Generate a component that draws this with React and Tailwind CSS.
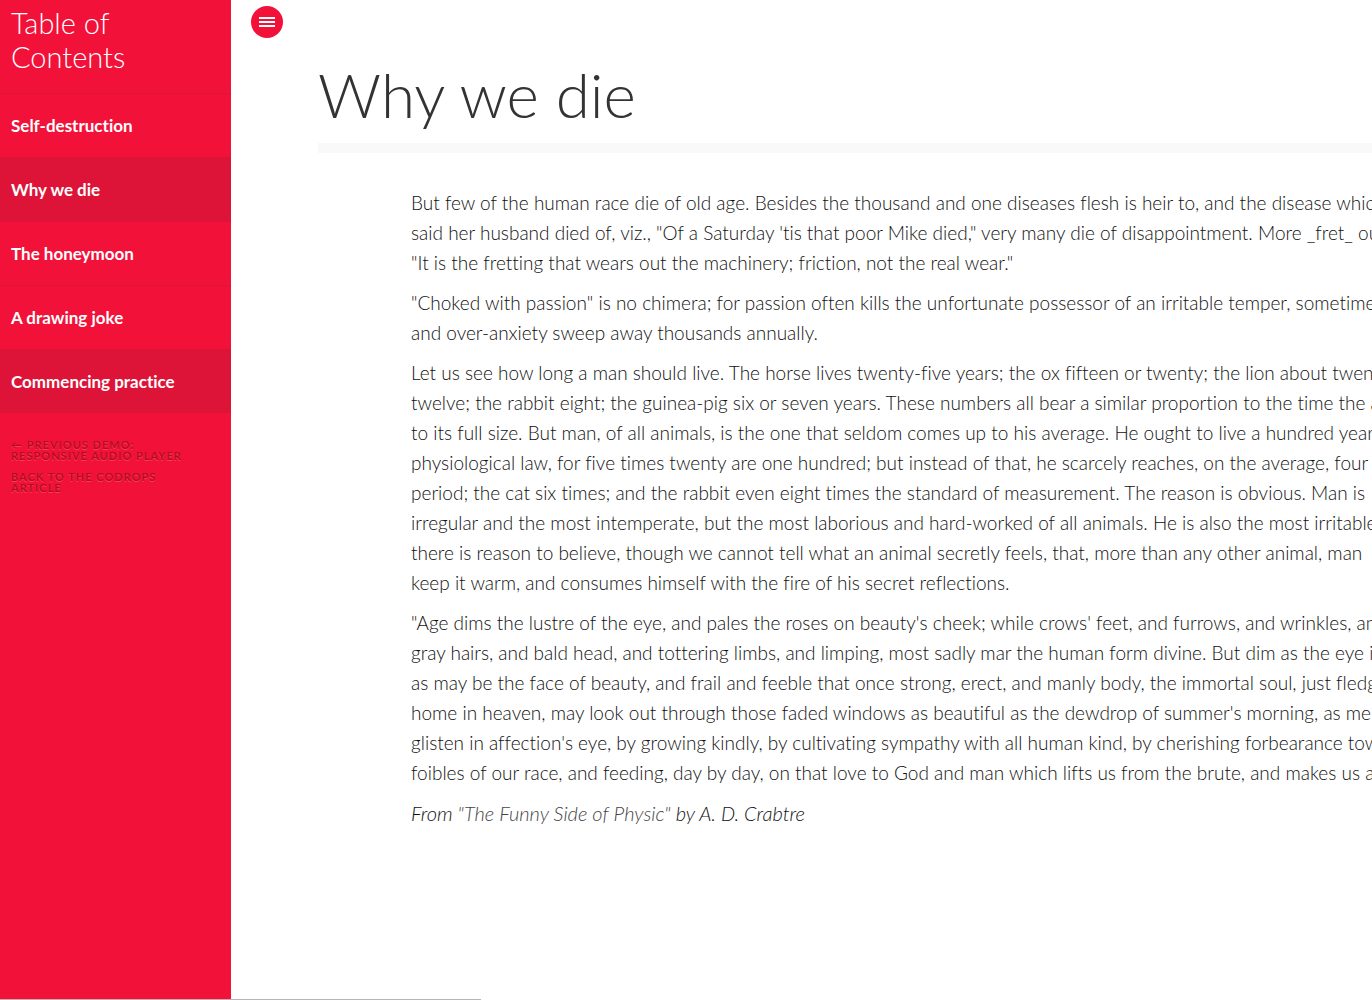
const chapters = [
  { title: "Self-destruction" },
  { title: "Why we die", marked: true },
  { title: "The honeymoon" },
  { title: "A drawing joke" },
  { title: "Commencing practice", marked: true },
];

const paragraphs = [
  [
    `But few of the human race die of old age. Besides the thousand and one diseases flesh is heir to, and the disease which`,
    `said her husband died of, viz., "Of a Saturday 'tis that poor Mike died," very many die of disappointment. More _fret_ out`,
    `"It is the fretting that wears out the machinery; friction, not the real wear."`,
  ],
  [
    `"Choked with passion" is no chimera; for passion often kills the unfortunate possessor of an irritable temper, sometimes`,
    `and over-anxiety sweep away thousands annually.`,
  ],
  [
    `Let us see how long a man should live. The horse lives twenty-five years; the ox fifteen or twenty; the lion about twenty`,
    `twelve; the rabbit eight; the guinea-pig six or seven years. These numbers all bear a similar proportion to the time the animal`,
    `to its full size. But man, of all animals, is the one that seldom comes up to his average. He ought to live a hundred years`,
    `physiological law, for five times twenty are one hundred; but instead of that, he scarcely reaches, on the average, four`,
    `period; the cat six times; and the rabbit even eight times the standard of measurement. The reason is obvious. Man is`,
    `irregular and the most intemperate, but the most laborious and hard-worked of all animals. He is also the most irritable`,
    `there is reason to believe, though we cannot tell what an animal secretly feels, that, more than any other animal, man`,
    `keep it warm, and consumes himself with the fire of his secret reflections.`,
  ],
  [
    `"Age dims the lustre of the eye, and pales the roses on beauty's cheek; while crows' feet, and furrows, and wrinkles, and`,
    `gray hairs, and bald head, and tottering limbs, and limping, most sadly mar the human form divine. But dim as the eye is`,
    `as may be the face of beauty, and frail and feeble that once strong, erect, and manly body, the immortal soul, just fledging`,
    `home in heaven, may look out through those faded windows as beautiful as the dewdrop of summer's morning, as melting`,
    `glisten in affection's eye, by growing kindly, by cultivating sympathy with all human kind, by cherishing forbearance towards`,
    `foibles of our race, and feeding, day by day, on that love to God and man which lifts us from the brute, and makes us akin`,
  ],
];

function Paragraph({ lines }) {
  return (
    <p className="whitespace-nowrap">
      {lines.map((line) => (
        <span key={line} className="block">
          {line}{" "}
        </span>
      ))}
    </p>
  );
}

function Sidebar() {
  return (
    <aside className="w-[231px] shrink-0 bg-[#f21139] text-white">
      <h2 className="px-[11px] pt-[6px] pb-[19px] text-[29px] leading-[34px] font-light">Table of Contents</h2>
      <nav>
        <ul>
          {chapters.map(({ title, marked }) => (
            <li key={title} className="border-t border-[#dd1437]">
              <a
                href="#chapter"
                className={
                  marked
                    ? "block bg-[#dd1437] px-[11px] py-5 text-[17px] leading-[23px] font-bold"
                    : "block px-[11px] py-5 text-[17px] leading-[23px] font-bold"
                }
              >
                {title}
              </a>
            </li>
          ))}
        </ul>
      </nav>
      <div className="space-y-[10px] pt-[26px] pr-[44px] pl-[11px] text-[11px] leading-[11px] font-bold tracking-[1px] text-[#b80c1e] uppercase [text-shadow:0_1px_0_rgba(255,255,255,0.2)]">
        <a href="#previous" className="block whitespace-nowrap">
          ← Previous Demo:
          <br />
          Responsive Audio Player
        </a>
        <a href="#article" className="block">
          Back to the Codrops Article
        </a>
      </div>
    </aside>
  );
}

export default function App() {
  return (
    <div className="relative flex h-screen overflow-hidden bg-white font-['Lato',sans-serif] text-[#333] [font-variant-ligatures:no-common-ligatures]">
      <Sidebar />
      <main className="w-full shrink-0">
        <button
          type="button"
          aria-label="Toggle table of contents"
          className="mt-[6px] ml-5 flex size-8 flex-col items-center justify-center gap-[2px] rounded-full bg-[#f21139]"
        >
          <span className="h-[2px] w-4 bg-white" />
          <span className="h-[2px] w-4 bg-white" />
          <span className="h-[2px] w-4 bg-white" />
        </button>
        <article className="mx-[87px] pt-5">
          <h1 className="border-b-[10px] border-[#f9f9f9] pb-[13px] text-[62px] leading-[72px] font-light">Why we die</h1>
          <div className="mx-[93px] mt-[35px] space-y-[10px] text-[19px] leading-[30px] font-light text-[#111]">
            {paragraphs.map((lines) => (
              <Paragraph key={lines[0]} lines={lines} />
            ))}
            <p className="text-[20px] italic">
              From{" "}
              <a href="#book" className="text-[#444]">
                "The Funny Side of Physic"
              </a>{" "}
              by A. D. Crabtre
            </p>
          </div>
        </article>
      </main>
      <div className="absolute bottom-0 left-0 h-px w-[481px] bg-[#b5b5b5]" />
    </div>
  );
}
